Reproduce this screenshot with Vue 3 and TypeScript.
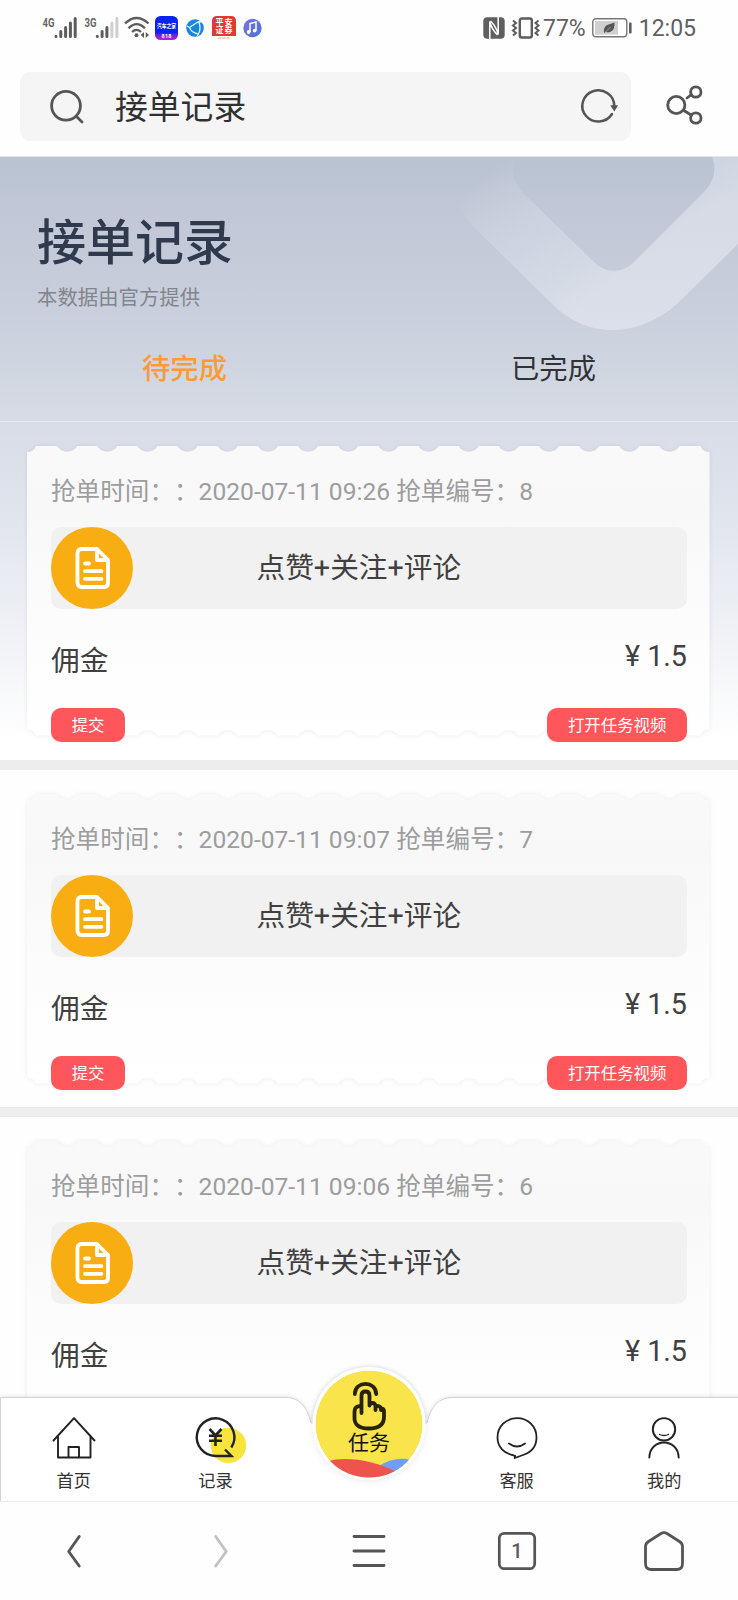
<script setup lang="ts">
interface Order {
  id: number
  time: string
  title: string
  fee: string
}

const orders: Order[] = [
  { id: 8, time: '2020-07-11 09:26', title: '点赞+关注+评论', fee: '1.5' },
  { id: 7, time: '2020-07-11 09:07', title: '点赞+关注+评论', fee: '1.5' },
  { id: 6, time: '2020-07-11 09:06', title: '点赞+关注+评论', fee: '1.5' },
]

// Outline of a ticket with scalloped top and bottom edges
function buildTicket(): string {
  const step = 40.15
  const w = 682.5
  const h = 289.5
  const d = 6
  let p = `M0 ${d} Q7 ${d} 9 0`
  for (let k = 1; k < 17; k++) {
    const c = k * step
    p += ` H${c - 10} C${c - 6} ${d + 1.5} ${c + 6} ${d + 1.5} ${c + 10} 0`
  }
  p += ` H${w - 9} Q${w - 7} ${d} ${w} ${d} V${h - d} Q${w - 7} ${h - d} ${w - 9} ${h}`
  for (let k = 16; k > 0; k--) {
    const c = k * step
    p += ` H${c + 10} C${c + 6} ${h - d - 1.5} ${c - 6} ${h - d - 1.5} ${c - 10} ${h}`
  }
  return p + ` H9 Q7 ${h - d} 0 ${h - d} Z`
}

const ticketPath = buildTicket()
</script>

<template>
  <div class="page">
    <div class="status">
      <div class="status-left">
        <svg class="ic-sig" width="35" height="24" viewBox="0 0 35 24">
          <text x="0.5" y="10.5" font-size="13" font-weight="700" textLength="12" lengthAdjust="spacingAndGlyphs" fill="#666">4G</text>
          <g stroke="#5c5c5c" stroke-width="3" stroke-linecap="round"><path d="M14 20.3v.2M18.8 15.5v5M23.6 11.5v9M28.4 7v13.5M33.2 2.5v18" /></g>
        </svg>
        <svg class="ic-sig2" width="35" height="24" viewBox="0 0 35 24">
          <text x="0.5" y="10.5" font-size="13" font-weight="700" textLength="12" lengthAdjust="spacingAndGlyphs" fill="#666">3G</text>
          <g stroke="#5c5c5c" stroke-width="3" stroke-linecap="round"><path d="M13.3 20.3v.2M18.1 15.5v5M22.9 11.5v9" /><path d="M27.9 7v13.5M32.9 2.5v18" stroke="#cfcfcf" /></g>
        </svg>
        <svg class="ic-wifi" width="26" height="24" viewBox="0 0 26 24" fill="none" stroke="#5c5c5c" stroke-width="2.3">
          <path d="M1 7.5Q12.5-3.5 24.5 7.5M4.5 12.3Q12.5 4 21 12.3M8 16Q12.5 11.8 17 16" />
          <circle cx="12.5" cy="19.3" r="2" fill="#5c5c5c" stroke="none" />
          <path d="M20 16v6l-3.3-3zM21.7 16v6l3.3-3z" fill="#5c5c5c" stroke="none" />
        </svg>
        <svg class="ic-auto" width="23" height="24" viewBox="0 0 23 24">
          <defs>
            <linearGradient id="auto" x1="0" y1="0" x2="0" y2="1"><stop offset=".68" stop-color="#0a22f2" /><stop offset=".8" stop-color="#7a1fd0" /><stop offset="1" stop-color="#a82bd0" /></linearGradient>
          </defs>
          <rect width="23" height="24" rx="5.5" fill="url(#auto)" />
          <text x="2" y="12.4" font-size="6.2" font-weight="700" textLength="19" lengthAdjust="spacingAndGlyphs" fill="#fff">汽车之家</text>
          <text x="6.500" y="21.500" font-size="5.500" font-weight="700" textLength="10" fill="#fff">818</text>
        </svg>
        <svg class="ic-globe" width="18" height="24" viewBox="0 0 18 24">
          <circle cx="9" cy="12" r="8.8" fill="#1687de" />
          <path d="M3.500 11.500L12.500 5.500M12.500 5.500Q15.500 12 12.500 18M12.500 18Q5.500 17 3.500 11.500M12.500 5.500l3.500.500M12.500 18l-1.500 2.500M3.500 11.500L1 10" fill="none" stroke="#e8f5ff" stroke-width="1.300" />
        </svg>
        <svg class="ic-pa" width="24" height="24" viewBox="0 0 24 24">
          <path d="M5 0h14q5 0 5 5v15H0V5q0-5 5-5z" fill="#e23a30" />
          <text x="3.500" y="8.800" font-size="8" font-weight="700" textLength="17" fill="#fff">平安</text>
          <text x="3.500" y="17.200" font-size="8" font-weight="700" textLength="17" fill="#fff">证券</text>
          <path d="M6.500 22h11" stroke="#f0a080" stroke-width="1.200" stroke-dasharray="3 1" />
        </svg>
        <svg class="ic-music" width="19" height="24" viewBox="0 0 19 24">
          <defs><linearGradient id="mus" x1="0" y1="0" x2="1" y2="1"><stop stop-color="#7d72d8" /><stop offset="1" stop-color="#4a72da" /></linearGradient></defs>
          <circle cx="9.500" cy="12" r="9.200" fill="url(#mus)" />
          <path d="M7 16V7.500l6-1.500v8.500" fill="none" stroke="#fff" stroke-width="1.500" />
          <circle cx="5.700" cy="16" r="1.900" fill="#fff" /><circle cx="11.700" cy="14.600" r="1.900" fill="#fff" />
        </svg>
      </div>
      <div class="status-right">
        <svg width="22" height="22" viewBox="0 0 22 22">
          <rect x=".3" y=".3" width="21.400" height="21.400" rx="4" fill="#5f5f5f" />
          <path d="M6.800 22V4.500Q8.500 12 14.500 18M15.200 0V17.500Q13.500 10 7.500 4" fill="none" stroke="#fff" stroke-width="1.500" />
        </svg>
        <svg class="ic-vib" width="28" height="22" viewBox="0 0 28 22" fill="none" stroke="#5c5c5c">
          <rect x="7.800" y="1.500" width="12" height="19" rx="2" stroke-width="2.400" />
          <path d="M1 3.500l3 2.500-3 2.500 3 2.500-3 2.500 3 2.500-3 2.500M26.500 3.500l-3 2.500 3 2.500-3 2.500 3 2.500-3 2.500 3 2.500" stroke-width="2" />
        </svg>
        <span class="pct">77%</span>
        <svg class="ic-bat" width="40" height="20" viewBox="0 0 40 20">
          <rect x=".8" y=".8" width="34" height="18" rx="3" fill="#fff" stroke="#777" stroke-width="1.400" />
          <rect x="3" y="3" width="23" height="13.600" fill="#cfcfcf" />
          <path d="M12 15Q11 8 16.500 6.500 20 5.700 22.500 4.500 23 12 18.500 13.800 15.500 14.800 14 13.800z" fill="#555" />
          <path d="M13.500 14l5-5" stroke="#bbb" stroke-width=".7" />
          <rect x="37" y="4.500" width="2.600" height="11" rx="1" fill="#5c5c5c" />
        </svg>
        <span class="clock">12:05</span>
      </div>
    </div>

    <div class="search-row">
      <div class="search">
        <svg width="34" height="34" viewBox="0 0 34 34" fill="none" stroke="#555" stroke-width="2.800" stroke-linecap="round"><circle cx="16" cy="15.800" r="14.400" /><path d="M26.500 26.500l5.500 5.500" /></svg>
        <span class="search-text">接单记录</span>
        <svg class="reload" width="37" height="36" viewBox="0 0 37 36" fill="none" stroke="#555" stroke-width="2.500" stroke-linecap="round">
          <path d="M31 26A16 15.600 0 1 1 33.300 18" /><path d="M30.700 18h5l-2.400 4z" fill="#555" stroke-width="1.600" />
        </svg>
      </div>
      <svg class="share" width="37" height="40" viewBox="0 0 37 40" fill="none" stroke="#555" stroke-width="2.800" stroke-linecap="round">
        <circle cx="10.300" cy="20" r="8.600" /><circle cx="29.800" cy="7" r="5.200" /><circle cx="29.800" cy="33" r="5.200" /><path d="M25.500 9.500l-4.500 3.500M17.500 25.200l8 5" />
      </svg>
    </div>

    <main class="view">
      <section v-for="(o, i) in orders" :key="o.id" class="block" :class="{ first: i === 0 }">
        <template v-if="i === 0">
          <svg class="chevron" width="290" height="180" viewBox="0 0 290 180">
            <defs>
              <linearGradient id="chev" gradientUnits="userSpaceOnUse" x1="35" y1="20" x2="140" y2="150">
                <stop stop-color="#fff" stop-opacity="0" /><stop offset=".5" stop-color="#e6eef5" stop-opacity=".3" /><stop offset="1" stop-color="#edf0f6" stop-opacity=".48" />
              </linearGradient>
            </defs>
            <path d="M8 0C4 35 12 56 27 71L104 147C140 182 188 182 229 147L290 87V0H264Q271 17 258 33L187 104C175 117 157 117 145 104L75 36Q60 20 67 0Z" fill="url(#chev)" />
          </svg>
          <header class="hero">
            <h1>接单记录</h1>
            <p>本数据由官方提供</p>
          </header>
          <div class="tabs">
            <span class="tab active">待完成</span>
            <span class="tab">已完成</span>
          </div>
        </template>
        <article class="card">
          <svg class="ticket" width="683" height="290" viewBox="0 0 683 290">
            <defs>
              <linearGradient :id="'tk' + o.id" x1="0" y1="0" x2="0" y2="1"><stop stop-color="#f9f9f9" /><stop offset=".22" stop-color="#f8f8f8" /><stop offset=".7" stop-color="#fdfdfd" /><stop offset="1" stop-color="#fff" /></linearGradient>
            </defs>
            <path :d="ticketPath" :fill="`url(#tk${o.id})`" />
          </svg>
          <div class="meta">抢单时间：<span>：</span>{{ o.time }} 抢单编号：{{ o.id }}</div>
          <div class="task">
            <div class="badge">
              <svg width="36" height="44" viewBox="0 0 36 44" fill="none" stroke="#fff" stroke-width="3.800" stroke-linecap="round" stroke-linejoin="round">
                <path d="M5.500 3H22L33 14V37q0 4-4 4H6.500q-4 0-4-4V7q0-4 4-4M22 3v11h11" /><path d="M10 17.500h4M10 25.200h16.500M10 32.800h16.500" />
              </svg>
            </div>
            <span class="task-title">{{ o.title }}</span>
          </div>
          <div class="fee"><span class="fee-label">佣金</span><span>¥ {{ o.fee }}</span></div>
          <div class="actions">
            <button type="button">提交</button>
            <button type="button">打开任务视频</button>
          </div>
        </article>
      </section>

      <nav class="nav">
        <svg class="nav-bg" width="738" height="136" viewBox="0 0 738 136">
          <path d="M.5 140V31.500H286Q305 31.500 311 57H427Q433 31.500 452 31.500H742V140Z" fill="#fff" stroke="#d4d4d4" />
          <circle class="ring" cx="369" cy="57.500" r="56.500" fill="#fff" />
        </svg>
        <div class="item">
          <svg width="44" height="42" viewBox="0 0 44 42" fill="none" stroke="#222" stroke-width="1.900" stroke-linejoin="round" stroke-linecap="round"><path d="M1.500 23.500L22 1.200 42.500 23.500M6 19v21.500h32.500V19M16.500 40.500V30h10.500v10.500" /></svg>
          <span>首页</span>
        </div>
        <div class="item record">
          <svg width="52" height="48" viewBox="0 0 52 48" fill="none" stroke="#222" stroke-width="2.400">
            <circle cx="33.500" cy="28.500" r="17.700" fill="#f9e43c" stroke="none" />
            <path d="M36.300 30.500A18.800 18.800 0 1 0 20.500 39H36.500l-6.500-6.500" />
            <path d="M14.500 12l6 6.500 6-6.500M20.500 18.500V29M14 18.800h13M14 23.800h13" stroke-width="2.600" />
          </svg>
          <span>记录</span>
        </div>
        <div class="item center">
          <svg class="ball" width="108" height="108" viewBox="0 0 108 108">
            <defs><clipPath id="ball"><circle cx="54" cy="54" r="53.600" /></clipPath></defs>
            <g clip-path="url(#ball)">
              <circle cx="54" cy="54" r="53.600" fill="#f9e44c" />
              <path d="M64 96Q80 86 96 90V108H64z" fill="#709ef2" />
              <path d="M0 97C16 85 50 86 82 102Q70 110 54 110H0z" fill="#ee534d" />
            </g>
            <g fill="none" stroke="#292205" stroke-width="3.800" stroke-linecap="round" stroke-linejoin="round">
              <path d="M39.800 24C40 10.500 61 10.500 61.200 24" />
              <path d="M46.500 43V25.500q0-4 4-4t4 4V35.500M54.500 35.500q.5-2.500 3-2.500t3 3v4M60.500 37.500q1-2 3-1.500 2.500.5 2.500 4M66 39q3-1 3 2v6q0 11.500-15.200 11.500T39.500 46.500V42q0-4.500 3-5.500 2-.5 4-.5" />
            </g>
            <text x="33" y="80" font-size="21" textLength="42" fill="#141204">任务</text>
          </svg>
        </div>
        <div class="item">
          <svg width="42" height="42" viewBox="0 0 42 42" fill="none" stroke="#222" stroke-width="1.800" stroke-linecap="round"><path d="M18 38.500C8 36.500 1.500 30 1.500 20.500 1.500 9.500 10 1.200 21 1.200S40.500 9.500 40.500 20.500C40.500 31 33 36 27 38L18.800 41 19 38.800z" /><path d="M13 26.500q8 6 16 0" /></svg>
          <span>客服</span>
        </div>
        <div class="item">
          <svg width="34" height="42" viewBox="0 0 34 42" fill="none" stroke="#222" stroke-width="1.900" stroke-linecap="round"><circle cx="17" cy="12.300" r="11.200" /><path d="M12.500 17.500q4.500 2 9 0" stroke-width="1.300" /><path d="M2.300 40.500C3 20.500 31 20.500 31.700 40.500" /></svg>
          <span>我的</span>
        </div>
      </nav>
    </main>

    <footer class="browser">
      <div><svg width="14" height="34" viewBox="0 0 14 34" fill="none" stroke="#555" stroke-width="2.900" stroke-linecap="round" stroke-linejoin="round"><path d="M12.200 2.500L1.700 17.500l10.500 14.500" /></svg></div>
      <div><svg width="14" height="34" viewBox="0 0 14 34" fill="none" stroke="#c2c2c2" stroke-width="2.900" stroke-linecap="round" stroke-linejoin="round"><path d="M1.700 2.500L12.200 17.500 1.700 32" /></svg></div>
      <div><svg width="34" height="34" viewBox="0 0 34 34" stroke="#555" stroke-width="2.900" stroke-linecap="round"><path d="M2 2.500h30M2 17h30M2 31.500h30" /></svg></div>
      <div><svg width="38" height="38" viewBox="0 0 38 38"><rect x="1.300" y="1.300" width="35.400" height="35.400" rx="5" fill="none" stroke="#555" stroke-width="2.700" /><text x="19" y="26" text-anchor="middle" font-size="20" font-weight="500" fill="#5c5c5c">1</text></svg></div>
      <div><svg width="40" height="40" viewBox="0 0 40 40" fill="none" stroke="#555" stroke-width="2.800"><path d="M17 2.500q3-1.600 6 0L35.500 10.500q3 2 3 5V32.500q0 6-6 6h-25q-6 0-6-6V15.500q0-3 3-5z" /></svg></div>
    </footer>
  </div>
</template>

<style>
body {
  margin: 0;
  background: #fefefe;
}
</style>

<style scoped>
.page {
  width: 738px;
  height: 1600px;
  overflow: hidden;
  display: flex;
  flex-direction: column;
  background: #fefefe;
  color: #404040;
  font-family: Roboto, "Noto Sans CJK SC", sans-serif;
}
svg {
  display: block;
  flex: none;
  overflow: visible;
}
.status {
  height: 56px;
  flex: none;
  display: flex;
  justify-content: space-between;
  padding: 0 42px;
}
.status-left,
.status-right {
  display: flex;
}
.status-left {
  padding-top: 16px;
}
.ic-sig2 {
  margin-left: 7px;
}
.ic-wifi,
.ic-auto {
  margin-left: 5px;
}
.ic-globe,
.ic-pa {
  margin-left: 8px;
}
.ic-music {
  margin-left: 7px;
}
.status-right {
  align-items: center;
  height: 55px;
  font-size: 23px;
  color: #606060;
}
.ic-vib {
  margin-left: 7px;
}
.pct {
  margin: 2px 6px 0 3px;
}
.clock {
  margin: 2px 0 0 7px;
}
.search-row {
  height: 101px;
  flex: none;
  box-sizing: border-box;
  border-bottom: 1px solid #e2e5ea;
  padding: 16px 0 0 20px;
  display: flex;
}
.search {
  width: 611px;
  height: 69px;
  border-radius: 11px;
  background: #f5f5f5;
  display: flex;
  align-items: center;
  box-sizing: border-box;
  padding: 0 13px 0 30px;
}
.search-text {
  flex: 1;
  margin: 4px 0 0 31px;
  font-size: 32.800px;
  line-height: 69px;
  color: #303030;
}
.reload {
  margin-top: -1px;
}
.share {
  margin: 13px 0 0 35px;
}
.view {
  flex: 1;
  min-height: 0;
  position: relative;
  overflow: hidden;
}
.block {
  box-sizing: border-box;
  height: 347px;
  border-bottom: 10px solid #ededed;
  padding-top: 24px;
  position: relative;
}
.block.first {
  height: 613px;
  padding-top: 0;
  background: linear-gradient(#b9c3d2 0, #c1c7d6 9%, #c9cfdc 26%, #d2d8e2 38%, #dadee8 47%, #e1e5ee 60%, #eff1f6 78%, #fff 97%);
  background-clip: padding-box;
}
.chevron {
  position: absolute;
  right: 0;
  top: 0;
}
.hero {
  position: relative;
  height: 169px;
  padding: 0 37px;
  overflow: hidden;
}
.hero h1 {
  margin: 52px 0 0;
  font-size: 49px;
  line-height: 70px;
  font-weight: 500;
  color: #2f3a4f;
}
.hero p {
  margin: 4px 0 0;
  font-size: 20.400px;
  line-height: 30px;
  color: #82858d;
}
.tabs {
  position: relative;
  display: flex;
  height: 95px;
  border-bottom: 1px solid #e6e9ef;
  margin-bottom: 24px;
}
.tab {
  flex: 1;
  text-align: center;
  font-size: 28.300px;
  line-height: 88px;
  color: #303236;
}
.tab.active {
  color: #f99c35;
  font-weight: 500;
}
.card {
  position: relative;
  margin: 0 27px;
  padding: 28px 24px 0;
}
.ticket {
  position: absolute;
  left: 0;
  top: 0;
  filter: drop-shadow(0 0 2px rgba(110, 120, 135, 0.14));
}
.meta,
.task,
.fee,
.actions {
  position: relative;
}
.meta {
  height: 36px;
  line-height: 36px;
  font-size: 24.600px;
  color: #9d9d9d;
  white-space: nowrap;
  text-spacing-trim: space-all;
}
.task {
  margin-top: 17px;
  height: 82px;
  border-radius: 10px;
  background: #f1f1f1;
  display: flex;
  align-items: center;
}
.badge {
  width: 82px;
  height: 82px;
  border-radius: 50%;
  background: #f8ae12;
  display: flex;
  align-items: center;
  justify-content: center;
}
.badge svg {
  margin-left: 1px;
}
.task-title {
  margin-left: 123.500px;
  font-size: 28.700px;
  line-height: 82px;
}
.fee {
  display: flex;
  justify-content: space-between;
  height: 99px;
  font-size: 28.700px;
  line-height: 94px;
}
.fee-label {
  line-height: 104px;
}
.actions {
  display: flex;
  justify-content: space-between;
}
button {
  height: 34px;
  border: 0;
  border-radius: 10px;
  padding: 2px 20.700px 0;
  background: #ff565b;
  color: #fff;
  font: 16.400px/32px Roboto, "Noto Sans CJK SC", sans-serif;
}
.nav {
  position: absolute;
  left: 0;
  right: 0;
  bottom: -1px;
  height: 136px;
  display: flex;
}
.nav-bg {
  position: absolute;
  left: 0;
  top: 0;
  filter: drop-shadow(0 0 2px rgba(0, 0, 0, 0.13));
}
.ring {
  filter: drop-shadow(0 1px 3px rgba(0, 0, 0, 0.08));
}
.item {
  position: relative;
  flex: 1;
  height: 136px;
  box-sizing: border-box;
  padding-top: 51px;
  display: flex;
  flex-direction: column;
  align-items: center;
  font-size: 17.200px;
  line-height: 24px;
  color: #333;
}
.item span {
  margin-top: 10px;
}
.item.record span {
  margin: 4px 12px 0 0;
}
.item.center {
  padding-top: 4px;
}
.browser {
  position: relative;
  height: 99px;
  box-sizing: border-box;
  border-top: 1px solid #ededed;
  flex: none;
  display: flex;
  background: #fefefe;
}
.browser div {
  flex: 1;
  display: flex;
  align-items: center;
  justify-content: center;
}
</style>
